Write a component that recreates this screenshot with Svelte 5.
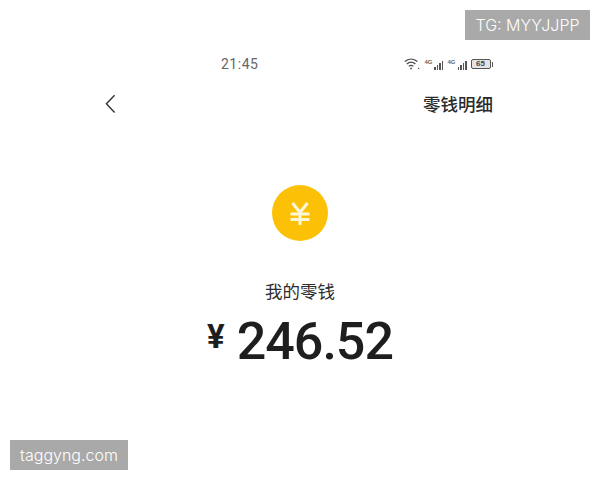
<script lang="ts">
  // wallet balance screen with two watermark stickers over it
  const bars = [3, 5, 7, 9];
</script>

<div class="page">
  <div class="status">
    <span class="time">21:45</span>
    <div class="icons">
      <svg class="wifi" width="16" height="12" viewBox="0 0 16 12" fill="none" stroke="#4a4a4a" stroke-width="1.3">
        <path d="M.8 3.6C4.6 .2 9.6 .2 13.4 3.6" />
        <path d="M2.8 6C5.6 3.6 8.6 3.6 11.4 6" />
        <path d="M4.8 8.3C6.2 7.2 8 7.2 9.4 8.3" />
        <circle cx="7.1" cy="10.4" r=".9" fill="#4a4a4a" stroke="none" />
        <circle cx="14.6" cy="10.4" r=".7" fill="#4a4a4a" stroke="none" />
      </svg>
      {#each [0, 1] as sim (sim)}
        <div class="signal">
          <span class="tag">4G</span>
          {#each bars as h (h)}
            <i style="height: {h}px"></i>
          {/each}
        </div>
      {/each}
      <div class="battery"><span>65</span></div>
      <div class="nub"></div>
    </div>
  </div>

  <div class="nav">
    <svg width="11" height="20" viewBox="0 0 11 20" fill="none" stroke="#333" stroke-width="1.4">
      <path d="M9.6 1.2L1.4 9.8L9.6 18.4" />
    </svg>
    <span class="detail">零钱明细</span>
  </div>

  <div class="balance">
    <div class="coin">
      <svg width="22" height="23" viewBox="0 0 22 23" fill="none" stroke="#fff7dc" stroke-width="3">
        <path d="M3.5 1L11 10.5L18.5 1" />
        <path d="M11 10.5V23" />
        <path d="M1.5 12H20.5" />
        <path d="M1.5 17.5H20.5" />
      </svg>
    </div>
    <div class="label">我的零钱</div>
    <div class="amount"><span class="yen">¥</span>246.52</div>
  </div>

  <div class="mark top">TG: MYYJJPP</div>
  <div class="mark bottom">taggyng.com</div>
</div>

<style>
  :global(body) {
    background: #fff;
  }
  .page {
    position: relative;
    width: 600px;
    height: 480px;
    overflow: hidden;
    box-sizing: border-box;
    padding-top: 55px;
    background: #fff;
    font-family: "Noto Sans CJK SC", "Noto Sans", sans-serif;
  }
  .status {
    display: flex;
    align-items: center;
    justify-content: space-between;
    height: 18px;
    padding: 0 107px 0 221px;
  }
  .time {
    font-family: Roboto, sans-serif;
    font-size: 14px;
    letter-spacing: 0.5px;
    color: #666;
  }
  .icons {
    display: flex;
    align-items: center;
    gap: 3px;
  }
  .signal {
    display: flex;
    align-items: flex-end;
    gap: 1px;
    height: 11px;
    padding-left: 1px;
  }
  .signal i {
    display: block;
    width: 1.5px;
    background: #555;
  }
  .tag {
    align-self: flex-start;
    margin-right: 1px;
    font-family: "Liberation Sans", sans-serif;
    font-size: 6px;
    line-height: 6px;
    font-weight: 700;
    color: #666;
  }
  .battery {
    display: flex;
    align-items: center;
    justify-content: center;
    width: 20px;
    height: 10px;
    margin-left: 1px;
    box-sizing: border-box;
    border: 1px solid #555;
    border-radius: 2px;
    background: #e4e4e4;
  }
  .battery span {
    font-family: "Liberation Sans", sans-serif;
    font-size: 8px;
    font-weight: 700;
    line-height: 1;
    color: #444;
  }
  .nub {
    width: 1.5px;
    height: 5px;
    margin-left: -2px;
    background: #555;
  }
  .nav {
    display: flex;
    align-items: center;
    justify-content: space-between;
    height: 24px;
    margin-top: 19px;
    padding: 0 107px 0 105px;
  }
  .detail {
    font-size: 17.5px;
    line-height: 24px;
    font-weight: 500;
    color: #2a2a2a;
  }
  .balance {
    display: flex;
    flex-direction: column;
    align-items: center;
    padding-top: 69px;
  }
  .coin {
    display: flex;
    align-items: center;
    justify-content: center;
    width: 56px;
    height: 56px;
    border-radius: 50%;
    background: #fcc107;
  }
  .label {
    margin-top: 38px;
    font-size: 17.5px;
    line-height: 24px;
    color: #2e2e2e;
  }
  .amount {
    display: flex;
    align-items: flex-start;
    margin-top: 9px;
    font-family: Roboto, sans-serif;
    font-size: 52px;
    line-height: 60px;
    font-weight: 500;
    letter-spacing: -1px;
    color: #1e1e1e;
  }
  .yen {
    margin-right: 12px;
    font-size: 33px;
    line-height: 50px;
    font-weight: 700;
    letter-spacing: 0;
  }
  .mark {
    position: absolute;
    display: flex;
    align-items: center;
    justify-content: center;
    height: 30px;
    background: #a9a9a9;
    color: #fff;
    font-family: Inter, "Liberation Sans", sans-serif;
    font-size: 16px;
    font-weight: 300;
  }
  .top {
    top: 10px;
    right: 10px;
    width: 125px;
  }
  .bottom {
    left: 10px;
    bottom: 10px;
    width: 118px;
  }
</style>
